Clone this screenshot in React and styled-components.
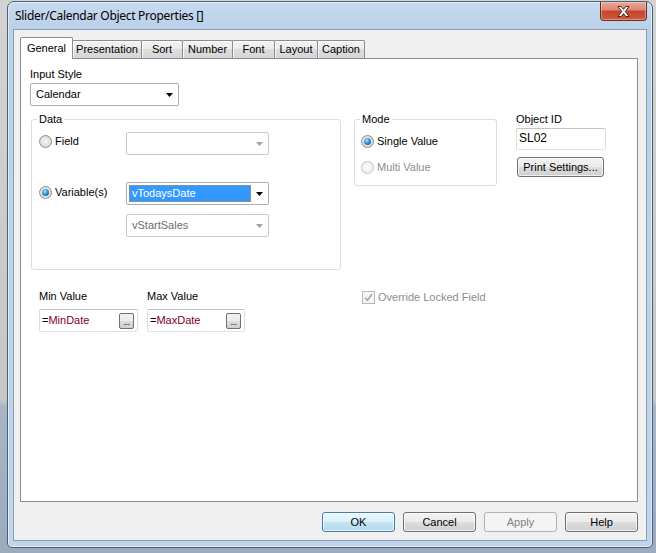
import styled, { createGlobalStyle } from "styled-components";

const GlobalStyle = createGlobalStyle`
  html, body {
    margin: 0;
    padding: 0;
  }
  body {
    width: 656px;
    height: 553px;
    overflow: hidden;
    background: linear-gradient(
      to bottom,
      #d3d3d3 0,
      #c6c6c6 400px,
      #a7b6c6 406px,
      #9aabbe 100%
    );
    font-family: "Liberation Sans", Arial, sans-serif;
    font-size: 11px;
    color: #000;
  }
`;

const Window = styled.div`
  margin: 1px 0 0 7px;
  width: 646px;
  height: 547px;
  box-sizing: border-box;
  border: 1px solid #4c5f77;
  border-radius: 7px 7px 5px 5px;
  background: linear-gradient(to bottom, #c6daef 0, #b9d0ea 28px, #bfd5ed 100%);
  box-shadow: inset 0 0 0 1px rgba(255, 255, 255, 0.55);
  padding: 0 5px 6px;
  display: flex;
  flex-direction: column;
`;

const TitleBar = styled.div`
  height: 27px;
  display: flex;
  justify-content: space-between;
  align-items: flex-start;
  padding-left: 2px;
`;

const TitleText = styled.span`
  font-family: "Noto Sans", "DejaVu Sans", sans-serif;
  font-size: 12px;
  line-height: 27px;
  color: #000;
  letter-spacing: -0.3px;
`;

const CloseButton = styled.div`
  width: 47px;
  height: 19px;
  box-sizing: border-box;
  border: 1px solid #6f2a1d;
  border-top: none;
  border-radius: 0 0 4px 4px;
  background: linear-gradient(
    to bottom,
    #e9a898 0,
    #dc8670 45%,
    #c4442b 50%,
    #cf5a3f 100%
  );
  box-shadow: inset 0 0 0 1px rgba(255, 255, 255, 0.35);
  display: flex;
  align-items: center;
  justify-content: center;
`;

const Client = styled.div`
  flex: 1;
  border: 1px solid #8a9db3;
  background: #f0f0f0;
  padding: 7px 8px 8px 6px;
  display: flex;
  flex-direction: column;
`;

const TabStrip = styled.div`
  height: 21px;
  display: flex;
  align-items: flex-end;
`;

const Tab = styled.div`
  width: ${(p) => p.$w}px;
  height: ${(p) => (p.$active ? 22 : 18)}px;
  margin-left: ${(p) => (p.$first ? 0 : -1)}px;
  margin-bottom: ${(p) => (p.$active ? -1 : 0)}px;
  box-sizing: border-box;
  border: 1px solid #898c95;
  border-bottom: none;
  border-radius: 2px 2px 0 0;
  position: relative;
  z-index: ${(p) => (p.$active ? 2 : 1)};
  background: ${(p) =>
    p.$active
      ? "#ffffff"
      : "linear-gradient(to bottom, #f2f2f2 0, #ebebeb 50%, #dddddd 50%, #d6d6d6 100%)"};
  box-shadow: inset 1px 1px 0 rgba(255, 255, 255, 0.8);
  text-align: center;
  line-height: ${(p) => (p.$active ? 20 : 17)}px;
  color: #000;
  white-space: nowrap;
`;

const Panel = styled.div`
  height: 444px;
  box-sizing: border-box;
  border: 1px solid #898c95;
  background: #ffffff;
  padding: 9px 0 0 9px;
  position: relative;
  z-index: 1;
`;

const Label = styled.div`
  line-height: 13px;
  color: ${(p) => (p.$disabled ? "#8d8d8d" : "#000")};
  white-space: nowrap;
`;

const Combo = styled.div`
  width: ${(p) => p.$w}px;
  height: 23px;
  margin-top: ${(p) => p.$mt || 0}px;
  box-sizing: border-box;
  border: 1px solid ${(p) => (p.$disabled ? "#c9c9c9" : "#abadb3")};
  border-radius: 2px;
  background: #fff;
  display: flex;
  align-items: center;
  padding: 0 5px 0 2px;
  color: ${(p) => (p.$disabled ? "#6d6d6d" : "#000")};
`;

const ComboText = styled.div`
  flex: 1;
  height: 17px;
  line-height: 15px;
  box-sizing: border-box;
  padding-left: 2px;
  border: 1px ${(p) => (p.$selected ? "dotted #d08a3a" : "solid transparent")};
  background: ${(p) => (p.$selected ? "#3399ff" : "transparent")};
  color: ${(p) => (p.$selected ? "#fff" : "inherit")};
  margin-right: ${(p) => (p.$selected ? 5 : 0)}px;
  white-space: nowrap;
  overflow: hidden;
`;

const Arrow = ({ disabled }) => (
  <svg width="7" height="4" viewBox="0 0 7 4">
    <path d="M0 0H7L3.5 4Z" fill={disabled ? "#a3a3a3" : "#000"} />
  </svg>
);

const MainRow = styled.div`
  display: flex;
  align-items: flex-start;
  margin-top: 13px;
`;

const LeftCol = styled.div`
  margin-left: 1px;
  width: 310px;
`;

const GroupBox = styled.div`
  height: ${(p) => p.$h}px;
  box-sizing: border-box;
  border: 1px solid #d5dfe5;
  border-radius: 3px;
  position: relative;
  padding: ${(p) => p.$pad};
`;

const Legend = styled.span`
  position: absolute;
  top: -7px;
  left: 5px;
  padding: 0 2px;
  line-height: 13px;
  background: #fff;
`;

const DataRow = styled.div`
  display: flex;
  align-items: flex-start;
  margin-top: ${(p) => p.$mt || 0}px;
`;

const RadioCell = styled.div`
  width: 87px;
  padding-top: ${(p) => p.$pt || 0}px;
`;

const RadioItem = styled.div`
  display: flex;
  align-items: center;
  gap: 3px;
  line-height: 13px;
  color: ${(p) => (p.$disabled ? "#8d8d8d" : "#000")};
`;

const Radio = styled.span`
  width: 13px;
  height: 13px;
  box-sizing: border-box;
  border-radius: 50%;
  border: 1px solid ${(p) => (p.$disabled ? "#c4c4c4" : "#8e8f8f")};
  background: ${(p) =>
    p.$disabled
      ? "radial-gradient(circle, #fbfbfb 0, #f0f0f0 60%, #e6e6e6 100%)"
      : "radial-gradient(circle, #f4f4f4 0, #e2e2e2 55%, #c9c9c9 100%)"};
  display: flex;
  align-items: center;
  justify-content: center;
  flex-shrink: 0;

  &::after {
    content: "";
    display: ${(p) => (p.$checked ? "block" : "none")};
    width: 7px;
    height: 7px;
    border-radius: 50%;
    background: radial-gradient(
      circle at 40% 35%,
      #a9e6ff 0,
      #2e93d9 45%,
      #0e4c86 100%
    );
  }
`;

const ModeStack = styled.div`
  display: flex;
  flex-direction: column;
  gap: 13px;
`;

const MinMaxRow = styled.div`
  display: flex;
  gap: 9px;
  margin-top: 20px;
  padding-left: 8px;
`;

const ValueField = styled.div`
  display: flex;
  flex-direction: column;
  gap: 6px;
`;

const Edit = styled.div`
  width: ${(p) => p.$w}px;
  height: ${(p) => p.$h || 23}px;
  margin-top: ${(p) => p.$mt || 0}px;
  box-sizing: border-box;
  border: 1px solid;
  border-color: #c3c3c3 #dcdcdc #e3e3e3 #dcdcdc;
  border-radius: 2px;
  background: #fff;
  display: flex;
  align-items: center;
  padding: 0 3px 0 2px;
  font-size: ${(p) => (p.$big ? 12 : 11)}px;
`;

const EditText = styled.span`
  flex: 1;
  white-space: nowrap;
  margin-top: -2px;
`;

const Expr = styled.span`
  color: #800020;
`;

const MiniButton = styled.div`
  width: 15px;
  height: 16px;
  box-sizing: border-box;
  border: 1px solid #707070;
  border-radius: 2px;
  background: linear-gradient(to bottom, #f2f2f2 0, #ebebeb 50%, #dddddd 50%, #cfcfcf 100%);
  font-size: 9px;
  line-height: 17px;
  text-align: center;
  letter-spacing: -0.5px;
`;

const ModeCol = styled.div`
  margin-left: 13px;
  width: 143px;
`;

const CheckRow = styled.div`
  display: flex;
  align-items: center;
  gap: 3px;
  margin-top: 105px;
  padding-left: 8px;
  line-height: 13px;
  color: #8d8d8d;
`;

const CheckBox = styled.span`
  width: 13px;
  height: 13px;
  box-sizing: border-box;
  border: 1px solid #b8b8b8;
  background: #f5f5f5;
  display: flex;
  align-items: center;
  justify-content: center;
`;

const ObjCol = styled.div`
  margin-left: 19px;
  margin-top: -6px;
  display: flex;
  flex-direction: column;
`;

const Button = styled.div`
  width: ${(p) => p.$w || 73}px;
  height: 20px;
  margin: ${(p) => p.$m || 0};
  box-sizing: border-box;
  border: 1px solid
    ${(p) => (p.$default ? "#3c7fb1" : p.$disabled ? "#adb2b5" : "#707070")};
  border-radius: 3px;
  background: ${(p) =>
    p.$default
      ? "linear-gradient(to bottom, #eaf6fd 0, #d9f0fc 50%, #c4e4f4 50%, #b5d8ea 100%)"
      : p.$disabled
      ? "#f4f4f4"
      : "linear-gradient(to bottom, #f2f2f2 0, #ebebeb 50%, #dddddd 50%, #cfcfcf 100%)"};
  box-shadow: ${(p) =>
    p.$disabled ? "none" : "inset 0 0 0 1px rgba(255, 255, 255, 0.7)"};
  color: ${(p) => (p.$disabled ? "#838383" : "#000")};
  text-align: center;
  line-height: 18px;
  white-space: nowrap;
`;

const ButtonRow = styled.div`
  display: flex;
  justify-content: flex-end;
  gap: 8px;
  margin-top: 10px;
`;

const tabs = [
  { name: "General", w: 53 },
  { name: "Presentation", w: 70 },
  { name: "Sort", w: 42 },
  { name: "Number", w: 51 },
  { name: "Font", w: 43 },
  { name: "Layout", w: 44 },
  { name: "Caption", w: 48 },
];

const App = () => {
  return (
    <>
      <GlobalStyle />
      <Window>
        <TitleBar>
          <TitleText>Slider/Calendar Object Properties []</TitleText>
          <CloseButton>
            <svg width="13" height="11" viewBox="0 0 13 11">
              <path
                d="M1 0.5H4.2L6.5 3.4L8.8 0.5H12L8.3 5.5L12 10.5H8.8L6.5 7.6L4.2 10.5H1L4.7 5.5Z"
                fill="#fff"
                stroke="#3a1810"
                strokeWidth="0.9"
                strokeLinejoin="round"
              />
            </svg>
          </CloseButton>
        </TitleBar>

        <Client>
          <TabStrip>
            {tabs.map((t, i) => (
              <Tab key={t.name} $w={t.w} $first={i === 0} $active={i === 0}>
                {t.name}
              </Tab>
            ))}
          </TabStrip>

          <Panel>
            <Label>Input Style</Label>
            <Combo $w={149} $mt={2}>
              <ComboText>Calendar</ComboText>
              <Arrow />
            </Combo>

            <MainRow>
              <LeftCol>
                <GroupBox $h={151} $pad="12px 0 0 7px">
                  <Legend>Data</Legend>
                  <DataRow>
                    <RadioCell $pt={3}>
                      <RadioItem>
                        <Radio />
                        Field
                      </RadioItem>
                    </RadioCell>
                    <Combo $w={143} $disabled>
                      <ComboText />
                      <Arrow disabled />
                    </Combo>
                  </DataRow>
                  <DataRow $mt={27}>
                    <RadioCell $pt={4}>
                      <RadioItem>
                        <Radio $checked />
                        Variable(s)
                      </RadioItem>
                    </RadioCell>
                    <Combo $w={143}>
                      <ComboText $selected>vTodaysDate</ComboText>
                      <Arrow />
                    </Combo>
                  </DataRow>
                  <DataRow $mt={9}>
                    <RadioCell />
                    <Combo $w={143} $disabled>
                      <ComboText>vStartSales</ComboText>
                      <Arrow disabled />
                    </Combo>
                  </DataRow>
                </GroupBox>

                <MinMaxRow>
                  <ValueField>
                    <Label>Min Value</Label>
                    <Edit $w={99}>
                      <EditText>
                        =<Expr>MinDate</Expr>
                      </EditText>
                      <MiniButton>...</MiniButton>
                    </Edit>
                  </ValueField>
                  <ValueField>
                    <Label>Max Value</Label>
                    <Edit $w={98}>
                      <EditText>
                        =<Expr>MaxDate</Expr>
                      </EditText>
                      <MiniButton>...</MiniButton>
                    </Edit>
                  </ValueField>
                </MinMaxRow>
              </LeftCol>

              <ModeCol>
                <GroupBox $h={67} $pad="15px 0 0 6px">
                  <Legend>Mode</Legend>
                  <ModeStack>
                    <RadioItem>
                      <Radio $checked />
                      Single Value
                    </RadioItem>
                    <RadioItem $disabled>
                      <Radio $disabled />
                      Multi Value
                    </RadioItem>
                  </ModeStack>
                </GroupBox>
                <CheckRow>
                  <CheckBox>
                    <svg width="9" height="9" viewBox="0 0 9 9">
                      <path
                        d="M1 4.8L3.4 7.3L8 1.2"
                        fill="none"
                        stroke="#a5a5a5"
                        strokeWidth="1.6"
                      />
                    </svg>
                  </CheckBox>
                  Override Locked Field
                </CheckRow>
              </ModeCol>

              <ObjCol>
                <Label>Object ID</Label>
                <Edit $w={90} $h={22} $mt={2} $big>
                  <EditText>SL02</EditText>
                </Edit>
                <Button $w={87} $m="7px 0 0 1px">
                  Print Settings...
                </Button>
              </ObjCol>
            </MainRow>
          </Panel>

          <ButtonRow>
            <Button $default>OK</Button>
            <Button>Cancel</Button>
            <Button $disabled>Apply</Button>
            <Button>Help</Button>
          </ButtonRow>
        </Client>
      </Window>
    </>
  );
};

export default App;
